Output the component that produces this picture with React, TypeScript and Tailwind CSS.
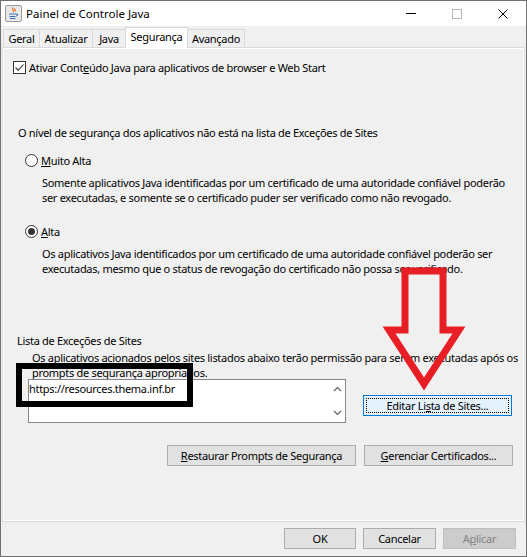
import React from 'react';

const font = "font-['Noto_Sans',sans-serif]";

const tabs = [
  { label: 'Geral', w: 'w-[37px]' },
  { label: 'Atualizar', w: 'w-[54px]' },
  { label: 'Java', w: 'w-[34px]' },
  { label: 'Segurança', w: 'w-[63px]', active: true },
  { label: 'Avançado', w: 'w-[58px]' },
];

const JavaIcon = () => (
  <svg width="17" height="17" viewBox="0 0 17 17">
    <rect x="0.5" y="0.5" width="16" height="16" rx="1.5" fill="#e8e8e8" stroke="#9a9a9a" />
    <path d="M8 2.5c-1.5 1.5 1.5 2.5 0 4.5M10 3.5c-1 1 1 1.8 0 3" stroke="#e7761b" strokeWidth="1.3" fill="none" />
    <path d="M4 9h7.5c1.5 0 1.5 2-0.5 2M4.5 11.5h6M5 13.5h5.5" stroke="#3a6fb0" strokeWidth="1.1" fill="none" />
  </svg>
);

const Button: React.FC<{ className?: string; children: React.ReactNode }> = ({ className = '', children }) => (
  <div className={`h-[21px] flex items-center justify-center border border-[#adadad] bg-[#e1e1e1] leading-[15px] text-black ${className}`}>
    {children}
  </div>
);

const Chevron: React.FC<{ down?: boolean }> = ({ down }) => (
  <svg width="9" height="6" viewBox="0 0 9 6">
    <path d={down ? 'M1 1l3.5 3.5L8 1' : 'M1 5l3.5-3.5L8 5'} stroke="#606060" strokeWidth="1.2" fill="none" />
  </svg>
);

export default function App() {
  return (
    <div className={`relative w-[527px] h-[557px] ${font} text-[11px] tracking-[-0.3px] text-black`}>
      <div className="w-full h-full border border-[#707070] bg-[#f0f0f0] flex flex-col">
        {/* title bar */}
        <div className="h-[25px] bg-white flex items-center">
          <div className="ml-[4px] mt-[-1px]">
            <JavaIcon />
          </div>
          <span className="ml-[4px] text-[11.5px] tracking-normal leading-[15px]">Painel de Controle Java</span>
          <div className="ml-auto flex items-center h-full">
            <div className="w-[46px] flex justify-center">
              <div className="w-[10px] h-px bg-black" />
            </div>
            <div className="w-[46px] flex justify-center">
              <div className="w-[10px] h-[10px] border border-[#b5b5b5]" />
            </div>
            <div className="w-[46px] flex justify-center">
              <svg width="10" height="10" viewBox="0 0 10 10">
                <path d="M0.5 0.5l9 9M9.5 0.5l-9 9" stroke="#000" strokeWidth="1" />
              </svg>
            </div>
          </div>
        </div>

        {/* tabs */}
        <div className="h-[21px] flex items-end pl-[2px]">
          {tabs.map((t, i) => (
            <div
              key={t.label}
              className={`${t.w} ${i > 0 ? '-ml-px' : ''} flex items-center justify-center border-t border-l border-r border-[#d9d9d9] leading-[15px] ${
                t.active ? 'h-[21px] bg-white relative z-10 mb-[-1px] pb-[3px]' : 'h-[18px] bg-[#f0f0f0]'
              }`}
            >
              {t.label}
            </div>
          ))}
        </div>

        {/* panel */}
        <div className="h-[475px] mx-px border border-[#d9d9d9] shadow-[inset_1px_1px_0_#fff,inset_-1px_-1px_0_#fff] flex flex-col leading-[15px]">
          <div className="mt-[12px] ml-[10px] flex items-center">
            <div className="w-[13px] h-[13px] border border-[#333] bg-white flex items-center justify-center">
              <svg width="11" height="11" viewBox="0 0 11 11">
                <path d="M1.5 5.5l2.7 2.7L9.5 2.5" stroke="#333" strokeWidth="1.1" fill="none" />
              </svg>
            </div>
            <span className="ml-[3px]">
              Ativar Cont<span className="underline">e</span>údo Java para aplicativos de browser e Web Start
            </span>
          </div>

          <div className="mt-[50px] ml-[15px]">O nível de segurança dos aplicativos não está na lista de Exceções de Sites</div>

          <div className="mt-[13px] ml-[22px] flex items-center">
            <div className="w-[13px] h-[13px] rounded-full border border-[#333] bg-white" />
            <span className="ml-[3px]">
              <span className="underline">M</span>uito Alta
            </span>
          </div>
          <div className="mt-[7px] ml-[39px] whitespace-nowrap">
            Somente aplicativos Java identificadas por um certificado de uma autoridade confiável poderão
            <br />
            ser executadas, e somente se o certificado puder ser verificado como não revogado.
          </div>

          <div className="mt-[19px] ml-[22px] flex items-center">
            <div className="w-[13px] h-[13px] rounded-full border border-[#333] bg-white flex items-center justify-center">
              <div className="w-[7px] h-[7px] rounded-full bg-[#333]" />
            </div>
            <span className="ml-[3px]">
              <span className="underline">A</span>lta
            </span>
          </div>
          <div className="mt-[7px] ml-[39px] whitespace-nowrap">
            Os aplicativos Java identificados por um certificado de uma autoridade confiável poderão ser
            <br />
            executadas, mesmo que o status de revogação do certificado não possa ser verificado.
          </div>

          <div className="mt-[57px] ml-[14px]">Lista de Exceções de Sites</div>
          <div className="mt-[2px] ml-[29px] whitespace-nowrap">
            Os aplicativos acionados pelos sites listados abaixo terão permissão para serem executadas após os
            <br />
            prompts de segurança apropriados.
          </div>

          <div className="mt-[-1px] ml-[25px] flex items-end">
            <div className="w-[318px] h-[44px] border border-[#828790] bg-white flex">
              <div className="flex-1 pt-[1px]">https://resources.thema.inf.br</div>
              <div className="w-[16px] flex flex-col items-center justify-between py-[6px]">
                <Chevron />
                <Chevron down />
              </div>
            </div>
            <div className="ml-[17px] mb-[7px] w-[149px] h-[21px] border border-[#0078d7] bg-[#e5f1fb] p-[2px]">
              <div className="w-full h-full border border-dotted border-black flex items-center justify-center">
                <span>
                  Editar Li<span className="underline">s</span>ta de Sites...
                </span>
              </div>
            </div>
          </div>

          <div className="mt-[22px] ml-[164px] flex gap-[8px]">
            <Button className="w-[189px]">
              <span>
                <span className="underline">R</span>estaurar Prompts de Segurança
              </span>
            </Button>
            <Button className="w-[149px]">
              <span>
                <span className="underline">G</span>erenciar Certificados...
              </span>
            </Button>
          </div>
        </div>

        {/* bottom buttons */}
        <div className="flex-1 flex items-start justify-end pt-[6px] pr-[10px] gap-[7px]">
          <Button className="w-[72px]">OK</Button>
          <Button className="w-[73px]">Cancelar</Button>
          <div className="w-[73px] h-[21px] flex items-center justify-center border border-[#bfbfbf] bg-[#cccccc] text-[#838383] leading-[15px]">
            <span>
              A<span className="underline">p</span>licar
            </span>
          </div>
        </div>
      </div>

      {/* annotation: black box */}
      <div className="absolute left-[16px] top-[363px] w-[177px] h-[44px] border-[6px] border-black" />

      {/* annotation: red arrow */}
      <svg className="absolute left-0 top-0 pointer-events-none" width="527" height="557" viewBox="0 0 527 557">
        <path
          d="M405 271H443V330H459L424 384L389 330H405Z"
          fill="none"
          stroke="#e81e25"
          strokeWidth="7"
          strokeLinejoin="miter"
        />
      </svg>
    </div>
  );
}
